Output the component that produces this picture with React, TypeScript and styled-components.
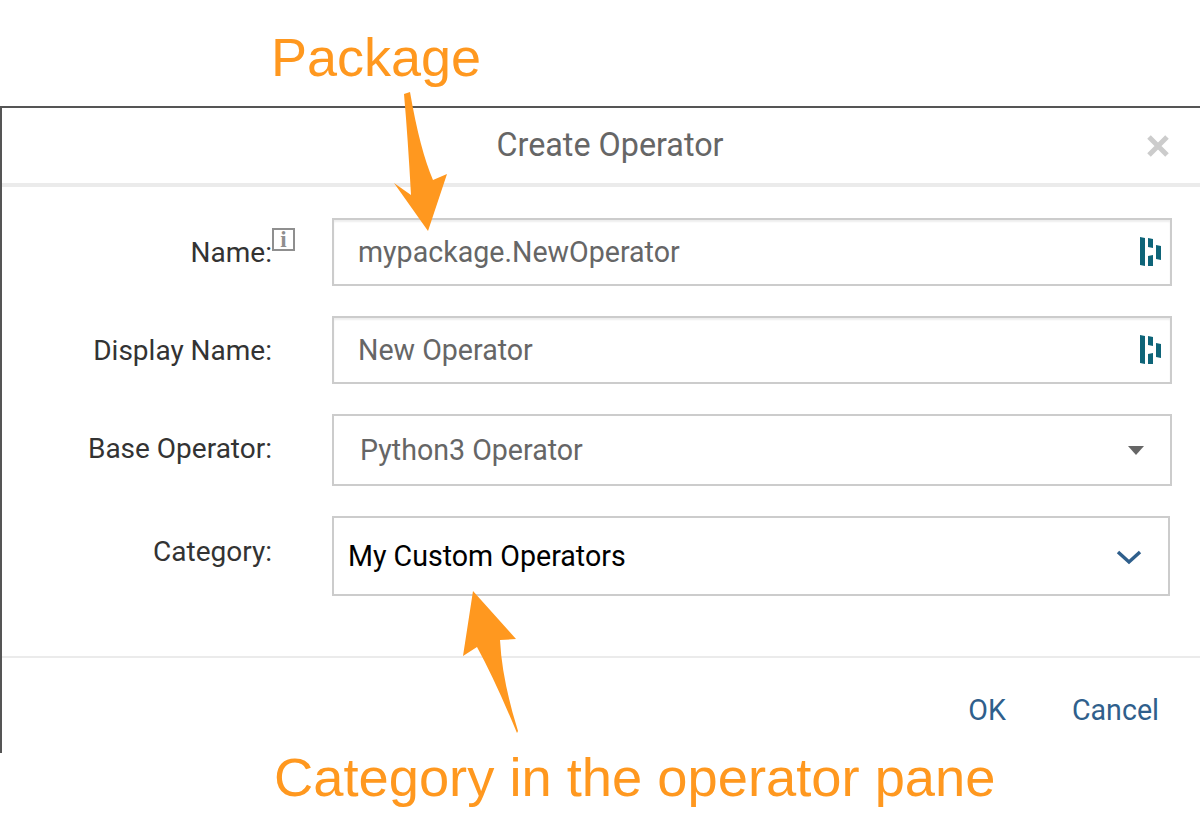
import React from "react";
import styled, { createGlobalStyle } from "styled-components";

const GlobalStyle = createGlobalStyle`
  html, body {
    margin: 0;
    padding: 0;
    background: #fff;
  }
`;

const Page = styled.div`
  position: relative;
  width: 1200px;
  height: 826px;
  overflow: hidden;
  background: #fff;
  font-family: Roboto, "Liberation Sans", sans-serif;
`;

const TopNote = styled.div`
  height: 106px;
  padding: 26px 0 0 271px;
  box-sizing: border-box;
  color: #ff981f;
  font-family: "Liberation Sans", Arial, sans-serif;
  font-size: 54px;
  line-height: 62px;
`;

const BottomNote = styled.div`
  padding-left: 274px;
  color: #ff981f;
  font-family: "Liberation Sans", Arial, sans-serif;
  font-size: 54.3px;
  line-height: 50px;
`;

const Dialog = styled.div`
  height: 647px;
  box-sizing: border-box;
  border-top: 2px solid #555;
  border-left: 2px solid #555;
  display: flex;
  flex-direction: column;
`;

const Header = styled.div`
  position: relative;
  height: 79px;
  box-sizing: border-box;
  border-bottom: 4px solid #ebebeb;
  display: flex;
  align-items: center;
  justify-content: center;
  padding: 0 0 2px 18px;
  color: #666;
  font-size: 32.3px;
`;

const CloseButton = styled.svg`
  position: absolute;
  right: 30px;
  top: 26px;
  width: 24px;
  height: 24px;
`;

const Form = styled.div`
  flex: 1;
  display: flex;
  flex-direction: column;
  gap: 30px;
  padding-top: 31px;
`;

const Row = styled.div`
  display: grid;
  grid-template-columns: 270px 1fr;
  column-gap: 60px;
  align-items: center;
`;

const Label = styled.label<{ $shift?: number }>`
  position: relative;
  text-align: right;
  color: #333;
  font-size: 28px;
  transform: translateY(${(p) => p.$shift ?? 0}px);
`;

const InfoBadge = styled.span`
  position: absolute;
  left: 270px;
  top: -8px;
  width: 23px;
  height: 23px;
  box-sizing: border-box;
  border: 2px solid #8f8f8f;
  color: #8f8f8f;
  font-family: "Liberation Serif", serif;
  font-weight: 700;
  font-size: 23px;
  line-height: 19px;
  text-align: center;
`;

const Field = styled.div<{ $height: number; $width?: number; $inset?: boolean }>`
  width: ${(p) => p.$width ?? 840}px;
  height: ${(p) => p.$height}px;
  box-sizing: border-box;
  border: 2px solid #ccc;
  display: flex;
  align-items: center;
  justify-content: space-between;
  box-shadow: ${(p) => (p.$inset ? "inset 0 2px 2px #eee" : "none")};
`;

const FieldValue = styled.span<{ $left: number; $dark?: boolean }>`
  padding-left: ${(p) => p.$left}px;
  color: ${(p) => (p.$dark ? "#000" : "#666")};
  font-size: 28.6px;
`;

const BrandIcon = styled.svg`
  width: 24px;
  height: 32px;
  margin-right: 7px;
`;

const CaretIcon = styled.svg`
  width: 16px;
  height: 9px;
  margin-right: 26px;
`;

const ChevronIcon = styled.svg`
  width: 26px;
  height: 15px;
  margin-right: 26px;
  transform: translateY(1px);
`;

const Footer = styled.div`
  height: 97px;
  box-sizing: border-box;
  border-top: 2px solid #ebebeb;
  display: flex;
  justify-content: flex-end;
  align-items: center;
  gap: 66px;
  padding: 9px 41px 0 0;
`;

const FooterButton = styled.span`
  color: #2f5f8c;
  font-size: 28.6px;
`;

const Arrow = styled.svg`
  position: absolute;
  left: 0;
  top: 0;
  width: 1200px;
  height: 826px;
  pointer-events: none;
`;

const Brand = () => (
  <BrandIcon viewBox="0 0 24 32">
    <g fill="#0e6478">
      <polygon points="1,1 6,2 6,30 1,29" />
      <polygon points="9,2 14,3 14,12 9,11" />
      <polygon points="9,20 14,19 14,30 9,30" />
      <polygon points="17,9 22,10 22,24 17,23" />
    </g>
  </BrandIcon>
);

export default function App() {
  return (
    <Page>
      <GlobalStyle />
      <TopNote>Package</TopNote>
      <Dialog>
        <Header>
          Create Operator
          <CloseButton viewBox="0 0 24 24">
            <path d="M3 3 L21 21 M21 3 L3 21" stroke="#ccc" strokeWidth="5" fill="none" />
          </CloseButton>
        </Header>
        <Form>
          <Row>
            <Label>
              Name:
              <InfoBadge>i</InfoBadge>
            </Label>
            <Field $height={68} $inset>
              <FieldValue $left={24}>mypackage.NewOperator</FieldValue>
              <Brand />
            </Field>
          </Row>
          <Row>
            <Label>Display Name:</Label>
            <Field $height={68} $inset>
              <FieldValue $left={24}>New Operator</FieldValue>
              <Brand />
            </Field>
          </Row>
          <Row>
            <Label $shift={-2}>Base Operator:</Label>
            <Field $height={72}>
              <FieldValue $left={26}>Python3 Operator</FieldValue>
              <CaretIcon viewBox="0 0 16 9">
                <polygon points="0,0 16,0 8,9" fill="#666" />
              </CaretIcon>
            </Field>
          </Row>
          <Row>
            <Label $shift={-5}>Category:</Label>
            <Field $height={80} $width={838}>
              <FieldValue $left={14} $dark>
                My Custom Operators
              </FieldValue>
              <ChevronIcon viewBox="0 0 26 15">
                <path d="M2 2 L13 12 L24 2" stroke="#2f5f8c" strokeWidth="3.5" fill="none" />
              </ChevronIcon>
            </Field>
          </Row>
        </Form>
        <Footer>
          <FooterButton>OK</FooterButton>
          <FooterButton>Cancel</FooterButton>
        </Footer>
      </Dialog>
      <BottomNote>Category in the operator pane</BottomNote>
      <Arrow viewBox="0 0 1200 826">
        <path
          d="M404 94 L410 92 Q420 150 433 180 L447 174 L428 231 L394 183 L411 195 Q408 140 404 94 Z"
          fill="#ff981f"
        />
        <path
          d="M473 591 L516 639 L500 640 Q502 680 518 731 L517 733 Q495 680 477 647 L463 656 Z"
          fill="#ff981f"
        />
      </Arrow>
    </Page>
  );
}
